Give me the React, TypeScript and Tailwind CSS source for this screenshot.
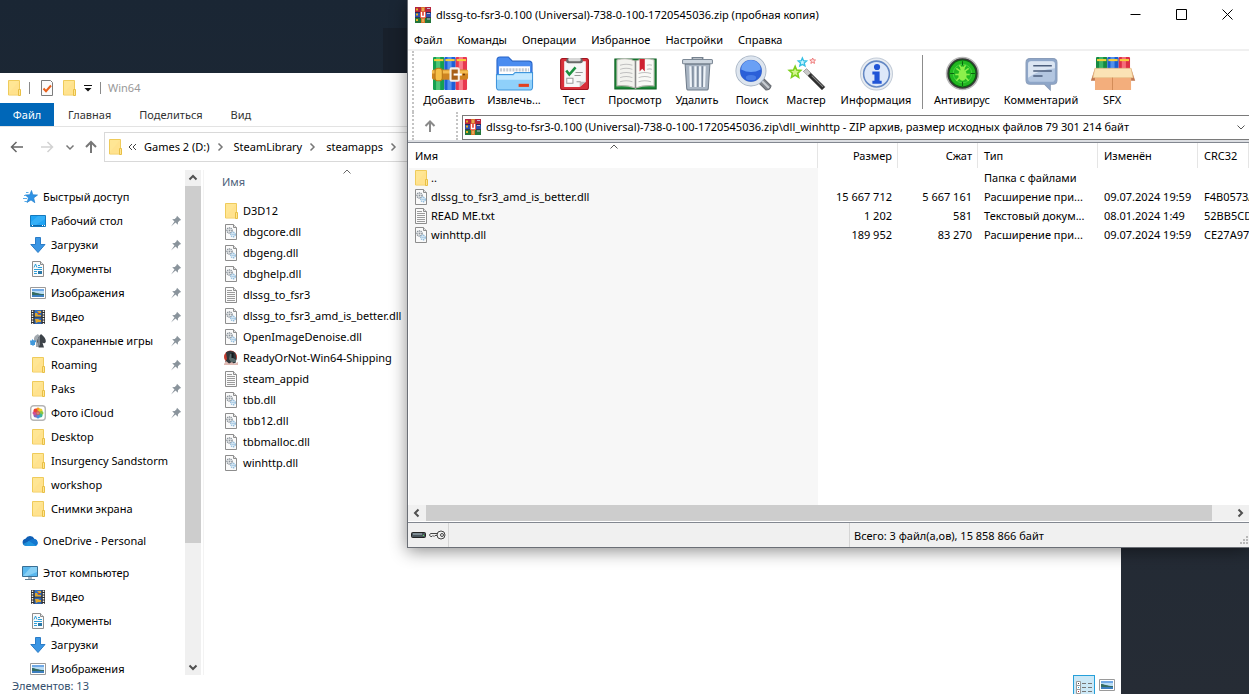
import { ReactNode } from 'react';

const TREE = [
  { icon: 'desktop', name: 'Рабочий стол', pin: true },
  { icon: 'download', name: 'Загрузки', pin: true },
  { icon: 'docs', name: 'Документы', pin: true },
  { icon: 'image', name: 'Изображения', pin: true },
  { icon: 'video', name: 'Видео', pin: true },
  { icon: 'games', name: 'Сохраненные игры', pin: true },
  { icon: 'folder', name: 'Roaming', pin: true },
  { icon: 'folder', name: 'Paks', pin: true },
  { icon: 'photos', name: 'Фото iCloud', pin: true },
  { icon: 'folder', name: 'Desktop' },
  { icon: 'folder', name: 'Insurgency Sandstorm' },
  { icon: 'folder', name: 'workshop' },
  { icon: 'folder', name: 'Снимки экрана' },
];

const COMPUTER = [
  { icon: 'video', name: 'Видео' },
  { icon: 'docs', name: 'Документы' },
  { icon: 'download', name: 'Загрузки' },
  { icon: 'image', name: 'Изображения' },
];

const FILES = [
  { icon: 'folder', name: 'D3D12' },
  { icon: 'dll', name: 'dbgcore.dll' },
  { icon: 'dll', name: 'dbgeng.dll' },
  { icon: 'dll', name: 'dbghelp.dll' },
  { icon: 'txt', name: 'dlssg_to_fsr3' },
  { icon: 'dll', name: 'dlssg_to_fsr3_amd_is_better.dll' },
  { icon: 'dll', name: 'OpenImageDenoise.dll' },
  { icon: 'exe', name: 'ReadyOrNot-Win64-Shipping' },
  { icon: 'txt', name: 'steam_appid' },
  { icon: 'dll', name: 'tbb.dll' },
  { icon: 'dll', name: 'tbb12.dll' },
  { icon: 'dll', name: 'tbbmalloc.dll' },
  { icon: 'dll', name: 'winhttp.dll' },
];

const ARCHIVE = [
  { icon: 'folder', name: '..', size: '', packed: '', type: 'Папка с файлами', date: '', crc: '' },
  { icon: 'dll', name: 'dlssg_to_fsr3_amd_is_better.dll', size: '15 667 712', packed: '5 667 161', type: 'Расширение при...', date: '09.07.2024 19:59', crc: 'F4B0573A' },
  { icon: 'txt', name: 'READ ME.txt', size: '1 202', packed: '581', type: 'Текстовый докум...', date: '08.01.2024 1:49', crc: '52BB5CD0' },
  { icon: 'dll', name: 'winhttp.dll', size: '189 952', packed: '83 270', type: 'Расширение при...', date: '09.07.2024 19:59', crc: 'CE27A97B' },
];

const TOOLS = [
  { icon: 'add', label: 'Добавить', w: 'w-16' },
  { icon: 'extract', label: 'Извлечь...', w: 'w-[66px]' },
  { icon: 'test', label: 'Тест', w: 'w-[54px]' },
  { icon: 'view', label: 'Просмотр', w: 'w-[68px]' },
  { icon: 'trash', label: 'Удалить', w: 'w-14' },
  { icon: 'find', label: 'Поиск', w: 'w-[54px]' },
  { icon: 'wizard', label: 'Мастер', w: 'w-[54px]' },
  { icon: 'info', label: 'Информация', w: 'w-[86px]' },
  { icon: 'sep', label: '', w: '' },
  { icon: 'virus', label: 'Антивирус', w: 'w-[72px]' },
  { icon: 'comment', label: 'Комментарий', w: 'w-[86px]' },
  { icon: 'sfx', label: 'SFX', w: 'w-14' },
];

const MENU = ['Файл', 'Команды', 'Операции', 'Избранное', 'Настройки', 'Справка'];

const page = <path d="M2.5.5h8l3 3v12h-11z" fill="#fafafa" stroke="#8d8d8d" />;
const fold = <path d="M10.500.5v3h3" fill="#e4e4e4" stroke="#8d8d8d" />;

const SMALL: Record<string, ReactNode> = {
  folder: (
    <>
      <path d="M2.500.5h11v14.500h-11z" fill="#ffe694" stroke="#efcb5b" />
      <path d="M3 13l10-12v14H3z" fill="#ffe08a" opacity=".6" />
      <path d="M12.500 9.500h2v6h-2z" fill="#ffe694" stroke="#e8bf45" />
    </>
  ),
  dll: (
    <>
      {page}{fold}
      <circle cx="6.500" cy="6.500" r="2.500" fill="none" stroke="#8a939b" strokeWidth="1.600" strokeDasharray="1.200 .6" />
      <circle cx="6.500" cy="6.500" r="1" fill="#8a939b" />
      <circle cx="10" cy="10.500" r="2.100" fill="#fff" stroke="#8fbbdc" strokeWidth="1.600" strokeDasharray="1.200 .6" />
      <circle cx="10" cy="10.500" r=".8" fill="#8fbbdc" />
    </>
  ),
  txt: (
    <>
      {page}{fold}
      <path d="M4 3.500h5M4 5.500h8M4 7.500h8M4 9.500h8M4 11.500h8M4 13.500h8" stroke="#9b9b9b" />
    </>
  ),
  docs: (
    <>
      {page}{fold}
      <path d="M4 6.500l1.500-3.500L7 6.500M8 4.500h2M8 6.500h4M4 8.500h8M4 10.500h3M4 12.500h3" fill="none" stroke="#2f9fd8" />
      <path d="M8 10h4v3H8z" fill="#2a78a8" />
    </>
  ),
  exe: (
    <>
      <circle cx="7.500" cy="7" r="6.500" fill="#c33b2e" />
      <path d="M3 2.500C5 .3 11 .4 12.500 3.500L13.500 9l-1 4-6 1.500L2 12l2-3z" fill="#30363a" />
      <path d="M7 4h3v4l3 2v2H8L6 9z" fill="#596b6c" />
      <path d="M1 14l2-3 3 2.500L9 12l2 2 4-2v3H1z" fill="#dfb9b2" />
      <path d="M9.500 3v5" stroke="#15191c" strokeWidth="2" />
    </>
  ),
  desktop: (
    <>
      <path d="M.5 2.500h15v11H.5z" fill="#20a5f5" stroke="#1479bd" />
      <path d="M8 3h7v3L6 12H1V9z" fill="#44b8fa" opacity=".6" />
      <path d="M1 12.500h14" stroke="#0c68ad" />
      <path d="M2 12.500h1M12 12.500h1M14 12.500h1" stroke="#fff" />
    </>
  ),
  download: <path d="M5.500.5h5v7h4.500L8 15.500.8 7.500h4.700z" fill="#3b96e4" stroke="#2b7cc7" />,
  image: (
    <>
      <path d="M.5 2.500h15v11H.5z" fill="#fff" stroke="#9a9a9a" />
      <path d="M2 4h12v8H2z" fill="#b9dcf5" />
      <path d="M2 4h12v2H2z" fill="#71a9e6" />
      <path d="M2 7c3 0 6 2 12 2v1.500H2z" fill="#356c63" />
      <path d="M2 10h12v2H2z" fill="#3d7fc0" />
    </>
  ),
  video: (
    <>
      <path d="M1 1h14v14H1z" fill="#2f2f2f" />
      <path d="M4.500 1h7v6.500h-7z" fill="#346fc0" />
      <path d="M4.500 8.500h7V15h-7z" fill="#2f66b4" />
      <path d="M5 4h2l1 2h3v1.500H5zM7 2h4v2H9zM5 10h3l2 1h1v2H8l-2 1z" fill="#e2a72b" />
      <path d="M8 4h2v1H8z" fill="#c13b2a" />
      <path d="M2.500 1.500v14M13.500 1.500v14" stroke="#f2f2f2" strokeWidth="1.500" strokeDasharray="1.500 1" />
    </>
  ),
  games: (
    <>
      <path d="M5 3l3-2 2 3-1 3v7H6V9H4V5z" fill="#a2a9af" />
      <path d="M0 7.500h2V6l2 1.500h2V9l-1 .5V12H4l-1 1-1-1H.5z" fill="#4199dc" />
      <path d="M11 1C15 4.500 16.200 6.500 15.700 9c-.6 1.500-2.200 1.600-3.200.8L14 14.500H8.500l1.500-4.700c-1 .8-2.300.4-2.700-.8C7 6.500 8.500 4 11 1z" fill="#3d4349" />
      <path d="M8 5l2-3v8l-1 4H8z" fill="#7b838a" />
    </>
  ),
  photos: (
    <>
      <rect x=".7" y=".7" width="14.600" height="14.600" rx="3" fill="#fff" stroke="#b5b5b5" strokeWidth="1.400" />
      <circle cx="8" cy="4.500" r="2" fill="#f59a23" /><circle cx="10.500" cy="5.500" r="2" fill="#e8d02c" />
      <circle cx="11.500" cy="8" r="2" fill="#8bc540" /><circle cx="10.500" cy="10.500" r="2" fill="#3db39e" />
      <circle cx="8" cy="11.500" r="2" fill="#4a90d9" /><circle cx="5.500" cy="10.500" r="2" fill="#8566b8" />
      <circle cx="4.500" cy="8" r="2" fill="#d04f95" /><circle cx="5.500" cy="5.500" r="2" fill="#ea4335" />
      <circle cx="8" cy="8" r="2" fill="#c9584a" /><circle cx="8" cy="8" r=".6" fill="#fff" />
    </>
  ),
  star: (
    <>
      <path d="M9.500 1.500l1.300 4.300 4.700.2-3.800 2.900 1.100 4.800-3.800-2.800-4 2.600 1.500-4.600L3.500 6l4.300-.2z" fill="#2f93e6" stroke="#2380cd" strokeWidth=".7" />
      <path d="M4 3.500h2.500M2 6.500h2M1 9.500h4M2.500 12.500h2.500" stroke="#56abe9" />
    </>
  ),
  cloud: (
    <>
      <path d="M4 13a3.700 3.700 0 01-.5-7.300A5 5 0 0112.500 6a3.600 3.600 0 01.3 7z" fill="#0f5fb5" />
      <path d="M6 8.500C9 5.500 14 5 15 8c1.500 1.500.8 5-2 5H4z" fill="#1477cf" />
      <path d="M1 11l6-3 7 4.500-1 .5H4c-1.500 0-2.500-.8-3-2z" fill="#28a8ea" opacity=".6" />
    </>
  ),
  pc: (
    <>
      <path d="M.5 1.500h15v10H.5z" fill="#5ab8ee" stroke="#3a6f94" />
      <path d="M9 2h6v5L5 11H1z" fill="#9bdaf8" opacity=".7" />
      <path d="M6 12h4v2H6z" fill="#a9b8c3" />
      <path d="M3 14.500h10" stroke="#5f7f95" />
    </>
  ),
  check: (
    <>
      <path d="M2.500.5h9l2 2v13h-11z" fill="#fbfbfb" stroke="#7c7c7c" />
      <path d="M4.500 8.500l2.500 2.700 5-5.700" fill="none" stroke="#e8601c" strokeWidth="2" />
    </>
  ),
  rar: (
    <>
      <path d="M0 0h16v5H0z" fill="#b5243c" /><path d="M0 5h16v5.500H0z" fill="#2e4fae" />
      <path d="M0 10.500h16V16H0z" fill="#23753a" />
      <path d="M0 5.500h16M0 10.500h16" stroke="#2a2340" strokeWidth=".8" />
      <path d="M1 1.500h2v2H1zM1 6.500h2v2H1zM1 12h2v2H1z" fill="#e6b422" />
      <path d="M12 1.500h3M12 6.500h3M12 12h3" stroke="#c4b8d0" />
      <path d="M6 0h4v16H6z" fill="#d8782e" />
      <path d="M5 4.500h6v6.500H5z" fill="#e0483a" />
      <path d="M6.500 5v4.500h3V5" fill="none" stroke="#fff" strokeWidth="1.300" />
      <path d="M8 1v3M8 12v3" stroke="#f4d878" />
    </>
  ),
};

const book = (x: number, fill: string, light: string, y: number, h: number) => (
  <>
    <rect x={x} y={y} width="11" height={h} rx="1" fill={fill} />
    <rect x={x + 3} y={y} width="4" height={h} fill={light} opacity=".7" />
    <rect x={x + 1} y={y + 2} width="9" height="2" fill="#f7d038" />
  </>
);

const LARGE: Record<string, ReactNode> = {
  add: (
    <>
      {book(0, '#15a050', '#68d488', 0, 32)}
      {book(11, '#1d5fd8', '#6ba8fa', 0, 32)}
      {book(22, '#e83850', '#ff9aa2', 0, 32)}
      <rect x="-1" y="12" width="35" height="10" rx="2" fill="#cf8420" />
      <rect x="-1" y="13" width="35" height="3" fill="#f5bc50" />
      <rect x="2" y="11" width="7" height="12" rx="3" fill="#f6bf48" stroke="#b87414" />
      <rect x="17" y="11" width="8" height="12" rx="1" fill="#a86018" stroke="#f5f0e8" strokeWidth="2" />
      <path d="M20 17h8" stroke="#fff" strokeWidth="2" />
      <circle cx="30" cy="17" r="1" fill="#6b3609" />
    </>
  ),
  extract: (
    <>
      <path d="M-1 3q0-3 3-3h8l4 4h16q3 0 3 3v20H-1z" fill="#4a8cf0" stroke="#2563c8" />
      <path d="M1 9h30v12H1z" fill="#fff" />
      <path d="M2 12.500h28" stroke="#c3c9d2" strokeWidth="3" strokeDasharray="2 1" />
      <path d="M-1.500 17h16l2-2h17v14q0 3-3 3h-29q-3 0-3-3z" fill="#8fd0fa" stroke="#3f95dc" />
      <path d="M-1 18h16l2-2h16v6H-1z" fill="#c3e8ff" />
      <path d="M20 26h10v3H20z" fill="#e2401f" />
    </>
  ),
  test: (
    <>
      <rect x="2.500" y="1.500" width="27" height="30" rx="2" fill="#d8303a" stroke="#a3141f" />
      <path d="M6 4h21v20l-6 5H6z" fill="#f7f7f7" />
      <path d="M27 24l-6 5v-5z" fill="#bdbdbd" />
      <rect x="8" y="1" width="16" height="5" rx="2" fill="#696969" />
      <rect x="10" y="1" width="12" height="3" rx="1" fill="#d8d8d8" />
      <path d="M8 13l3 4 6-7" fill="none" stroke="#1d9140" strokeWidth="2.500" />
      <path d="M17 15h7M16 18h6M18 24h4" stroke="#999" />
      <path d="M8.500 20.500h6v5h-6z" fill="#fff" stroke="#9b9b9b" />
    </>
  ),
  view: (
    <>
      <path d="M-4 2h40v29H-4z" fill="#1d8a38" stroke="#0d5f22" />
      <path d="M-2 3Q7 0 16 4v26Q7 27-2 28z" fill="#f2f2ee" stroke="#b8b8b0" />
      <path d="M34 3Q25 0 16 4v26q9-3 18-2z" fill="#fafaf7" stroke="#b8b8b0" />
      <path d="M1 8q6-2 12 0M1 12q6-2 12 0M1 16q6-2 12 0M1 20q6-2 12 0M1 24q6-2 12 0M19 16q6-2 12 0M19 20q6-2 12 0M19 24q6-2 12 0M27 8q3-1 5 0M27 12q3-1 5 0" fill="none" stroke="#c0c0c0" />
      <path d="M16 4v26" stroke="#888" strokeWidth="1.500" />
      <path d="M20 2h5v12l-2.500-2.500L20 14z" fill="#cf2030" />
    </>
  ),
  trash: (
    <>
      <path d="M11 3V.7h10V3" fill="none" stroke="#76828f" strokeWidth="1.500" />
      <rect x="1.500" y="2.500" width="29" height="4" rx="1" fill="#cdd6df" stroke="#7c8895" />
      <path d="M4 7h24l-1.500 23q0 2-2 2h-17q-2 0-2-2z" fill="#a9b5c3" stroke="#6f7c8b" />
      <path d="M9 9l.6 20M14 9v20M18.500 9v20M23 9l-.6 20" stroke="#eff4f9" strokeWidth="2" />
      <path d="M11.500 9v20M16.300 9v20M20.700 9v20" stroke="#738194" />
    </>
  ),
  find: (
    <>
      <path d="M23 22l3-2 8 8q-1 4-5 4l-7-7z" fill="#80858c" stroke="#63676d" />
      <path d="M25 23l7 7" stroke="#c9cdd2" strokeWidth="2" />
      <circle cx="14.500" cy="13.500" r="12.500" fill="#1c49bd" stroke="#a3b0c0" strokeWidth="5" />
      <circle cx="14.500" cy="13.500" r="12.500" fill="none" stroke="#dde5ef" strokeWidth="3.500" />
      <circle cx="14.500" cy="13.500" r="10.500" fill="#2b5fd8" />
      <path d="M5 12a9.500 9 0 0119 0q-9.500 5-19 0z" fill="#6aa0f5" />
      <ellipse cx="14.500" cy="20" rx="5" ry="2.500" fill="#5b90f0" opacity=".6" />
    </>
  ),
  wizard: (
    <>
      <path d="M13 14l3-2.500L34 29l-3 3z" fill="#2e2e2e" stroke="#777" strokeWidth=".7" />
      <path d="M13 14l3-2.500 4 4-3 3z" fill="#c9c9c9" />
      <path d="M21 18l11 11" stroke="#8b8b8b" />
      <path d="M5 9l1.500 3.600 4 .4-3 2.700.9 4L5 17.600 1.400 19.700l.9-4L-.8 13l4.200-.4z" fill="#d4f58c" stroke="#7ccf1c" strokeWidth="1.500" />
      <path d="M12 1l1.100 2.600 2.900.3-2.200 1.900.7 2.800L12 7.200 9.500 8.600l.7-2.800L8 3.900l2.900-.3z" fill="#c9f4ff" stroke="#32bfe4" strokeWidth="1.300" />
      <path d="M22 1l.8 1.700 2 .2-1.500 1.300.5 2L22 5.200l-1.800 1 .5-2-1.500-1.300 2-.2z" fill="#ffdcdc" stroke="#ea6a6a" strokeWidth=".8" />
    </>
  ),
  info: (
    <>
      <circle cx="16" cy="16.500" r="15.500" fill="#e9edf2" stroke="#c3ccd8" />
      <circle cx="16" cy="16.500" r="12.500" fill="#dde8f9" stroke="#6488c4" strokeWidth="1.500" />
      <circle cx="16.500" cy="9.700" r="3" fill="#2155d6" />
      <path d="M12 14h7v9h2v3h-9v-3h2v-6h-2z" fill="#2155d6" />
    </>
  ),
  virus: (
    <>
      <circle cx="16" cy="16" r="15.500" fill="#3a3a3a" stroke="#b9b9b9" strokeWidth="1.500" />
      <circle cx="16" cy="16" r="13" fill="#22b821" stroke="#0a5d10" />
      <circle cx="16" cy="16" r="9" fill="none" stroke="#4ed847" strokeWidth=".8" />
      <path d="M16 4v4M16 24v4M4 16h4M24 16h4" stroke="#0c6411" />
      <path d="M10 11l4 3M22 11l-4 3M9 17h14M10 23l4-4M22 23l-4-4M13 8l2 3M19 8l-2 3" stroke="#8df04b" strokeWidth="1.500" />
      <ellipse cx="16" cy="17.500" rx="4" ry="5.500" fill="#8df04b" />
      <circle cx="16" cy="11.500" r="2.200" fill="#8df04b" />
    </>
  ),
  comment: (
    <>
      <path d="M5 1.500h22q4 0 4 4v17q0 4-4 4h-2.500V32L19 26.500H5q-4 0-4-4v-17q0-4 4-4z" fill="#8ea6c8" stroke="#8a9dba" />
      <path d="M6 4h20q3 0 3 3v14q0 3-3 3H6q-3 0-3-3V7q0-3 3-3z" fill="#b3c6e0" />
      <path d="M6 4h20q3 0 3 3v4Q15 12 3 20V7q0-3 3-3z" fill="#dbe5f2" />
      <path d="M8 8.500h18M8 13.500h18M8 18.500h9" stroke="#4c5e7c" strokeWidth="1.500" />
    </>
  ),
  sfx: (
    <>
      {book(0, '#168a42', '#4fc878', 0, 14)}
      {book(11, '#1b5fd0', '#6aa5f8', 0, 14)}
      {book(22, '#dd2f45', '#ff8890', 0, 14)}
      <path d="M-1 11L-5 23h4V12zM34 11l4 12h-4V12z" fill="#c07850" />
      <path d="M-1 19h35v13H-1z" fill="#f3ae7c" />
      <path d="M-1 11h35l2 9H-3z" fill="#fbe3b5" stroke="#e8bd88" strokeWidth=".7" />
      <path d="M16 20v12" stroke="#d38c58" />
    </>
  ),
};

function Icon({ name }: { name: string }) {
  return <svg viewBox="0 0 16 16" className="size-4 shrink-0" aria-hidden="true">{SMALL[name]}</svg>;
}

function Pin() {
  return (
    <svg viewBox="0 0 12 12" className="size-3 shrink-0" aria-hidden="true">
      <path d="M7 .8L11.200 5l-1.500.5-1.700 1.700-.2 2.600L5.500 7.500 1 11.500 4.500 6.500 2.200 4.200l2.600-.2 1.700-1.700z" fill="#8a949c" />
    </svg>
  );
}

function Chevron({ dir, className }: { dir: 'up' | 'down' | 'left' | 'right'; className: string }) {
  const d = {
    up: 'M1.500 6.500L5 3l3.500 3.500',
    down: 'M1.500 3.500L5 7l3.500-3.500',
    left: 'M6.500 1.500L3 5l3.500 3.500',
    right: 'M3.500 1.500L7 5 3.500 8.500',
  }[dir];
  return (
    <svg viewBox="0 0 10 10" className={`size-2.5 shrink-0 fill-none ${className}`} aria-hidden="true">
      <path d={d} />
    </svg>
  );
}

function TreeRow({ icon, name, pin, root }: { icon: string; name: string; pin?: boolean; root?: boolean }) {
  return (
    <li>
      <button className={`flex h-6 w-full items-center gap-[5px] pr-[3px] text-left whitespace-nowrap ${root ? 'pl-[22px]' : 'pl-[30px]'}`}>
        <Icon name={icon} />
        <span className="flex-1">{name}</span>
        {pin && <Pin />}
      </button>
    </li>
  );
}

function Explorer() {
  return (
    <section className="absolute top-[73px] right-32 bottom-0 left-0 flex flex-col overflow-hidden bg-white" aria-label="Win64">
      <header className="flex h-[30px] shrink-0 items-center pl-1.5">
        <Icon name="folder" />
        <span className="mx-[7px] h-3 w-px bg-[#8a8a8a]" />
        <button className="ml-0.5" aria-label="Свойства"><Icon name="check" /></button>
        <button className="ml-1.5" aria-label="Новая папка"><Icon name="folder" /></button>
        <button className="ml-1.5" aria-label="Настроить панель">
          <svg viewBox="0 0 10 10" className="size-2.5" aria-hidden="true"><path d="M1 2.500h8" stroke="#111" /><path d="M1.500 5h7L5 8.500z" fill="#111" /></svg>
        </button>
        <span className="mx-[7px] h-3 w-px bg-[#8a8a8a]" />
        <h1 className="text-[#999]">Win64</h1>
      </header>

      <nav className="flex h-[23px] shrink-0 items-stretch gap-7 text-[#333]">
        <button className="-mr-3.5 w-[54px] bg-[#0067b8] text-white">Файл</button>
        <button>Главная</button>
        <button>Поделиться</button>
        <button>Вид</button>
      </nav>

      <div className="flex h-9 shrink-0 items-center border-t border-[#e3e3e3] pt-1">
        <div className="flex w-[104px] shrink-0 items-center pl-2.5">
          <button aria-label="Назад">
            <svg viewBox="0 0 14 14" className="size-3.5 fill-none stroke-[#666] stroke-[1.500px]" aria-hidden="true"><path d="M13 7H1.500M6.500 2L1.500 7l5 5" /></svg>
          </button>
          <button className="ml-4" aria-label="Вперед">
            <svg viewBox="0 0 14 14" className="size-3.5 fill-none stroke-[#d2d2d2] stroke-[1.500px]" aria-hidden="true"><path d="M1 7h11.500M7.500 2l5 5-5 5" /></svg>
          </button>
          <button className="ml-[11px]" aria-label="Последние расположения"><Chevron dir="down" className="stroke-[#777] stroke-[1.500px]" /></button>
          <button className="ml-[9px]" aria-label="Вверх">
            <svg viewBox="0 0 14 14" className="size-3.5 fill-none stroke-[#777] stroke-2" aria-hidden="true"><path d="M7 13V2M2 7l5-5 5 5" /></svg>
          </button>
        </div>
        <div className="flex h-[30px] flex-1 items-center gap-[5px] border border-[#d9d9d9] pl-0.5 whitespace-nowrap">
          <Icon name="folder" />
          <svg viewBox="0 0 9 8" className="h-2 w-[9px] fill-none stroke-[#444]" aria-hidden="true"><path d="M4 1L1 4l3 3M8 1L5 4l3 3" /></svg>
          <button className="ml-0.5">Games 2 (D:)</button>
          <Chevron dir="right" className="stroke-[#777] stroke-[1.500px]" />
          <button className="ml-1">SteamLibrary</button>
          <Chevron dir="right" className="stroke-[#777] stroke-[1.500px]" />
          <button className="ml-1">steamapps</button>
          <Chevron dir="right" className="stroke-[#777] stroke-[1.500px]" />
        </div>
      </div>

      <div className="mt-2 flex min-h-0 flex-1">
        <nav className="w-[185px] shrink-0 overflow-hidden pt-[15px]">
          <ul>
            <TreeRow icon="star" name="Быстрый доступ" root />
            {TREE.map(t => <TreeRow key={t.name} {...t} />)}
          </ul>
          <ul className="mt-2"><TreeRow icon="cloud" name="OneDrive - Personal" root /></ul>
          <ul className="mt-2">
            <TreeRow icon="pc" name="Этот компьютер" root />
            {COMPUTER.map(t => <TreeRow key={t.name} {...t} />)}
          </ul>
        </nav>
        <div className="flex w-4 shrink-0 flex-col items-center bg-[#f0f0f0]">
          <button className="flex h-4 shrink-0 items-center" aria-label="Прокрутить вверх"><Chevron dir="up" className="stroke-[#505050] stroke-2" /></button>
          <div className="h-[357px] w-full shrink bg-[#cdcdcd]" />
          <button className="mt-auto flex h-4 shrink-0 items-center" aria-label="Прокрутить вниз"><Chevron dir="down" className="stroke-[#505050] stroke-2" /></button>
        </div>
        <div className="ml-0.5 w-[220px] shrink-0 border-l border-[#f3f3f3]">
          <table className="w-full table-fixed">
            <thead>
              <tr>
                <th className="relative h-[30px] pb-1.5 pl-[18px] text-left font-normal text-[#4c607a]">
                  Имя
                  <span className="absolute top-[-3px] left-[138px]"><Chevron dir="up" className="stroke-[#666]" /></span>
                </th>
              </tr>
            </thead>
            <tbody>
              {FILES.map(f => (
                <tr key={f.name}>
                  <td className="h-[21px] p-0 pl-[19px]">
                    <div className="flex items-center gap-1 whitespace-nowrap"><Icon name={f.icon} />{f.name}</div>
                  </td>
                </tr>
              ))}
            </tbody>
          </table>
        </div>
      </div>

      <footer className="flex h-[19px] shrink-0 items-end overflow-hidden text-[#35506e]">
        <span className="flex-1 pl-3">Элементов: 13</span>
        <button className="flex h-[19px] w-[22px] items-center justify-center border border-b-0 border-[#26a0da] bg-[#cce8f6] pt-1" aria-label="Таблица">
          <svg viewBox="0 0 18 16" className="h-4 w-[18px]" aria-hidden="true">
            <path d="M1.500 2.500h4v4h-4zM1.500 6.500h4v4h-4zM1.500 10.500h4v4h-4z" fill="#fff" stroke="#999" />
            <path d="M3 4.500h1" stroke="#444" /><path d="M3 8.500h1" stroke="#26a0da" /><path d="M3 12.500h1" stroke="#b33" />
            <path d="M7 4.500h4M13 4.500h4M7 8.500h4M13 8.500h4M7 12.500h4M13 12.500h4" stroke="#777" />
          </svg>
        </button>
        <button className="mr-1.5 ml-1 flex h-[17px] items-start" aria-label="Эскизы"><Icon name="image" /></button>
      </footer>
    </section>
  );
}

function WinRar() {
  const cell = 'h-[19px] overflow-hidden p-0 whitespace-nowrap';
  const head = 'h-[25px] border-r border-[#e5e5e5] p-0 font-normal whitespace-nowrap';
  return (
    <section className="absolute top-0 right-0 left-[407px] flex h-[548px] flex-col border-b border-l border-[#6b6f76] bg-white shadow-[0_3px_16px_rgba(0,0,0,0.45)]" aria-label="WinRAR">
      <header className="flex h-[30px] shrink-0 items-center gap-[5px] pl-[7px]">
        <Icon name="rar" />
        <h1 className="flex-1 whitespace-nowrap">dlssg-to-fsr3-0.100 (Universal)-738-0-100-1720545036.zip (пробная копия)</h1>
        <div className="-mr-px flex pb-0.5">
          {[['Свернуть', 'M.5 5.500h10'], ['Развернуть', 'M.5.5h10v10H.5z'], ['Закрыть', 'M.5.5l10 10M10.500.5l-10 10']].map(([label, d]) => (
            <button key={label} className="flex w-[46px] items-center justify-center" aria-label={label}>
              <svg viewBox="0 0 11 11" className="size-[11px] fill-none stroke-black" aria-hidden="true"><path d={d} /></svg>
            </button>
          ))}
        </div>
      </header>

      <nav className="flex h-[21px] shrink-0 gap-[15px] border-b-2 border-[#f0f0f0] pl-1.5">
        {MENU.map(m => <button key={m}>{m}</button>)}
      </nav>

      <div className="flex h-[61px] shrink-0 pl-1">
        <span className="mr-[3px] border-l-2 border-dotted border-[#c4c4c4]" />
        {TOOLS.map(t => t.icon === 'sep' ? (
          <span key="sep" className="mx-[3px] mt-1 h-[54px] w-px bg-[#8c8c8c]" />
        ) : (
          <button key={t.label} className={`flex flex-col items-center pt-1.5 whitespace-nowrap ${t.w}`}>
            <svg viewBox="0 0 32 32" className="size-[33px] shrink-0 overflow-visible" aria-hidden="true">{LARGE[t.icon]}</svg>
            <span className="leading-5">{t.label}</span>
          </button>
        ))}
      </div>

      <div className="flex h-[30px] shrink-0 items-center border-b-2 border-[#dcdee2] pl-1">
        <span className="h-full border-l-2 border-dotted border-[#c4c4c4]" />
        <button className="flex w-[42px] items-center pl-2.5" aria-label="На уровень вверх">
          <svg viewBox="0 0 12 12" className="size-3 fill-none stroke-[#8a8a8a] stroke-2" aria-hidden="true"><path d="M6 12V2M1.500 6L6 1.500 10.500 6" /></svg>
        </button>
        <span className="h-full border-l-2 border-dotted border-[#c4c4c4]" />
        <label className="mt-0.5 ml-1 flex h-[25px] flex-1 items-center border border-r-0 border-[#7a7a7a] pr-[3px] pl-0.5">
          <Icon name="rar" />
          <select className="ml-[5px] w-0 flex-1 appearance-none bg-transparent outline-none" aria-label="Путь">
            <option>dlssg-to-fsr3-0.100 (Universal)-738-0-100-1720545036.zip\dll_winhttp - ZIP архив, размер исходных файлов 79 301 214 байт</option>
          </select>
          <Chevron dir="down" className="stroke-[#555]" />
        </label>
      </div>

      <div className="min-h-0 flex-1 overflow-hidden border-t border-[#828790] pl-px">
        <table className="h-full w-full table-fixed border-separate border-spacing-0">
          <colgroup>
            <col className="w-[409px]" /><col className="w-20" /><col className="w-20" />
            <col className="w-[120px]" /><col className="w-[100px]" /><col />
          </colgroup>
          <thead>
            <tr>
              <th className={`${head} relative pl-1.5 text-left`}>
                Имя
                <span className="absolute -top-px left-[200px]"><Chevron dir="up" className="stroke-[#555]" /></span>
              </th>
              <th className={`${head} pr-[5px] text-right`}>Размер</th>
              <th className={`${head} pr-[5px] text-right`}>Сжат</th>
              <th className={`${head} pl-1.5 text-left`}>Тип</th>
              <th className={`${head} pl-1.5 text-left`}>Изменён</th>
              <th className={`${head} pl-1.5 text-left`}>CRC32</th>
            </tr>
          </thead>
          <tbody>
            {ARCHIVE.map(f => (
              <tr key={f.name}>
                <td className={`${cell} bg-[#f7f7f7] pl-1`}>
                  <div className="flex items-center gap-0.5"><Icon name={f.icon} />{f.name}</div>
                </td>
                <td className={`${cell} pr-1.5 text-right`}>{f.size}</td>
                <td className={`${cell} pr-1.5 text-right`}>{f.packed}</td>
                <td className={`${cell} pl-1.5`}>{f.type}</td>
                <td className={`${cell} pl-1.5`}>{f.date}</td>
                <td className={`${cell} pl-1.5`}>{f.crc}</td>
              </tr>
            ))}
            <tr aria-hidden="true"><td className="bg-[#f7f7f7] p-0" /><td colSpan={5} className="p-0" /></tr>
          </tbody>
        </table>
      </div>

      <div className="flex h-4 shrink-0 items-stretch bg-[#f0f0f0]">
        <button className="flex w-[18px] items-center justify-center" aria-label="Влево"><Chevron dir="left" className="stroke-[#505050] stroke-2" /></button>
        <div className="flex-1 bg-[#cdcdcd]" />
        <button className="flex w-[37px] items-center justify-end pr-1" aria-label="Вправо"><Chevron dir="right" className="stroke-[#505050] stroke-2" /></button>
      </div>

      <footer className="mt-px flex h-[25px] shrink-0 items-center border-t border-[#828790] bg-[#f0f0f0]">
        <div className="flex h-full w-[41px] items-center gap-[3px] border-r border-[#d5d5d5] pl-[3px]">
          <svg viewBox="0 0 15 8" className="h-2 w-[15px]" aria-hidden="true"><rect x=".5" y="1.500" width="14" height="5" rx="1" fill="#4a555c" stroke="#222" /><path d="M2 3h9" stroke="#aebfc6" /><path d="M12 4.500h1" stroke="#5e5" /></svg>
          <svg viewBox="0 0 17 10" className="h-2.5 w-[17px] fill-none stroke-[#444]" aria-hidden="true"><circle cx="12" cy="5" r="4" /><circle cx="13" cy="5" r="1.500" /><path d="M8.500 3.500H1.500L.5 5l1 1.500h1.500l1-1 1 1 1-1h2" /></svg>
        </div>
        <div className="h-full w-[401px] border-r border-[#d5d5d5]" />
        <p className="flex-1 pt-0.5 pl-1">Всего: 3 файл(а,ов), 15 858 866 байт</p>
        <svg viewBox="0 0 9 9" className="mb-0.5 size-[9px] self-end fill-[#b8b8b8]" aria-hidden="true"><path d="M6 0h2v2H6zM3 3h2v2H3zM6 3h2v2H6zM0 6h2v2H0zM3 6h2v2H3zM6 6h2v2H6z" /></svg>
      </footer>
    </section>
  );
}

export default function App() {
  return (
    <main className="relative h-screen overflow-hidden bg-linear-to-b from-[#1a2634] to-[#262c35] font-['Noto_Sans','Open_Sans',sans-serif] text-[11px] leading-4 text-black">
      <div className="absolute top-7 left-[383px] h-[45px] w-6 bg-[#18202b]" />
      <Explorer />
      <WinRar />
    </main>
  );
}
